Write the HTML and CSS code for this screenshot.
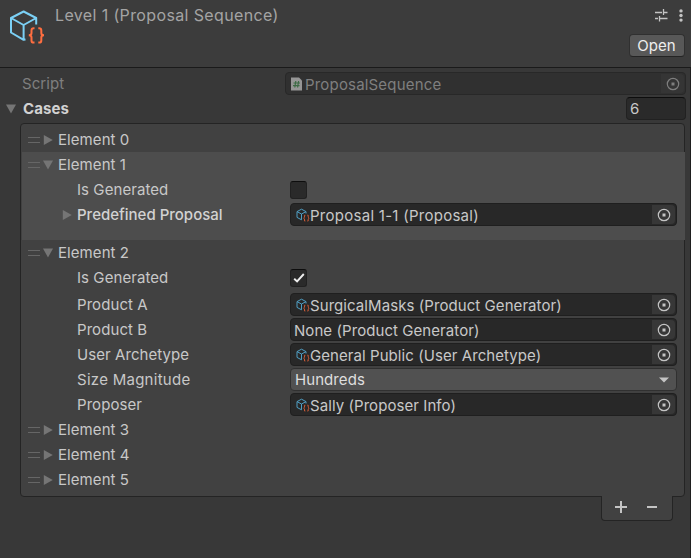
FILE: index.html
```html
<!DOCTYPE html>
<html lang="en">
<head>
<meta charset="utf-8">
<title>Inspector</title>
<link rel="stylesheet" href="styles.css">
</head>
<body>
<svg class="defs" aria-hidden="true">
  <symbol id="asset" viewBox="0 0 36 36">
    <path d="M27.200 16.500V10L14.600 3.500 2 10v14.500l12.600 7.300 1.900-.2M2 10l12.600 7L27.200 10M14.600 17v14.800" fill="none" stroke="#7bd0f5" stroke-width="2" stroke-linejoin="round"/>
    <path d="M25.500 20.200h-.8q-2.200 0-2.200 2.200v2.600q0 2.300-2.700 2.300 2.700 0 2.700 2.300v2.800q0 2.200 2.200 2.200h.8M29.300 20.200h.8q2.200 0 2.200 2.200v2.600q0 2.300 2.700 2.300-2.700 0-2.700 2.300v2.800q0 2.200-2.200 2.200h-.8" fill="none" stroke="#ff6e40" stroke-width="2"/>
  </symbol>
  <symbol id="asset-small" viewBox="0 0 14 14">
    <path d="M10 5.500V3.600L5.500 1.200 1 3.600v5.800l4.500 2.400M1 3.600l4.500 2.400L10 3.600M5.500 6v5.800" fill="none" stroke="#4f9fc4" stroke-width="1"/>
    <path d="M9.400 7.200h-.9v2l-.9.9.9.9v2h.9M11.300 7.200h.9v2l.9.9-.9.9v2h-.9" fill="none" stroke="#c55a38" stroke-width="1"/>
  </symbol>
  <symbol id="picker" viewBox="0 0 14 14">
    <circle cx="7" cy="7" r="5.700" fill="none" stroke="currentColor" stroke-width="1.200"/>
    <rect x="5.500" y="5.500" width="3" height="3" fill="currentColor"/>
  </symbol>
  <symbol id="right" viewBox="0 0 10 10"><path d="M.8 0v10L9.800 5z" fill="currentColor"/></symbol>
  <symbol id="down" viewBox="0 0 10 10"><path d="M0 .5h10L5 9.500z" fill="currentColor"/></symbol>
</svg>
<div class="inspector">
  <header class="header">
    <svg class="asset-icon"><use href="#asset"/></svg>
    <h1 class="title">Level 1 (Proposal Sequence)</h1>
    <div class="actions">
      <div class="tools">
        <svg width="13" height="13" viewBox="0 0 13 13"><path d="M0 3.500h7M8.500 3.500h4M8.500 0v6M0 9.500h3M5 9.500h7.500M4.500 7v5.500" fill="none" stroke="#c4c4c4" stroke-width="1.300"/></svg>
        <svg width="4" height="13" viewBox="0 0 4 13"><g fill="#c4c4c4"><circle cx="2" cy="1.900" r="1.700"/><circle cx="2" cy="6.500" r="1.700"/><circle cx="2" cy="11.100" r="1.700"/></g></svg>
      </div>
      <button class="open">Open</button>
    </div>
  </header>
  <main class="body">
    <div class="script-row">
      <span class="script-label">Script</span>
      <div class="field disabled">
        <svg class="script-icon" viewBox="0 0 12 14"><path d="M0 .5h8l3 3v10H0z" fill="#969696"/><path d="M4.800 4 3.800 10.500M7.600 4 6.600 10.500M2.500 6h6.500M2 8.600h6.500" stroke="#3d6b45" stroke-width="1.200"/></svg>
        <span class="value">ProposalSequence</span>
        <span class="pick"><svg><use href="#picker"/></svg></span>
      </div>
    </div>
    <div class="cases-row">
      <svg class="arrow"><use href="#down"/></svg>
      <span class="cases-label">Cases</span>
      <div class="count">6</div>
    </div>
    <section class="list">
      <div class="element"><div class="head"><i class="grip"></i><svg class="arrow"><use href="#right"/></svg><span>Element 0</span></div></div>
      <div class="element selected">
        <div class="head"><i class="grip"></i><svg class="arrow"><use href="#down"/></svg><span>Element 1</span></div>
        <div class="prop"><span class="name">Is Generated</span><span class="check"></span></div>
        <div class="prop strong"><svg class="arrow"><use href="#right"/></svg><span class="name">Predefined Proposal</span>
          <div class="field"><svg class="small"><use href="#asset-small"/></svg><span class="value wide">Proposal 1-1 (Proposal)</span><span class="pick"><svg><use href="#picker"/></svg></span></div></div>
      </div>
      <div class="element">
        <div class="head"><i class="grip"></i><svg class="arrow"><use href="#down"/></svg><span>Element 2</span></div>
        <div class="prop toggle"><span class="name">Is Generated</span><span class="check"><svg width="12" height="12" viewBox="0 0 12 12"><path d="m1.200 6.700 2.900 2.800L10.800 2" fill="none" stroke="#eee" stroke-width="1.900"/></svg></span></div>
        <div class="prop"><span class="name">Product A</span>
          <div class="field"><svg class="small"><use href="#asset-small"/></svg><span class="value">SurgicalMasks (Product Generator)</span><span class="pick"><svg><use href="#picker"/></svg></span></div></div>
        <div class="prop"><span class="name">Product B</span>
          <div class="field empty"><span class="value">None (Product Generator)</span><span class="pick"><svg><use href="#picker"/></svg></span></div></div>
        <div class="prop"><span class="name">User Archetype</span>
          <div class="field"><svg class="small"><use href="#asset-small"/></svg><span class="value">General Public (User Archetype)</span><span class="pick"><svg><use href="#picker"/></svg></span></div></div>
        <div class="prop"><span class="name wide">Size Magnitude</span>
          <div class="field select"><span class="value">Hundreds</span><svg class="caret" viewBox="0 0 10 6"><path d="M0 .5h10L5 5.500z" fill="#c4c4c4"/></svg></div></div>
        <div class="prop"><span class="name">Proposer</span>
          <div class="field"><svg class="small"><use href="#asset-small"/></svg><span class="value">Sally (Proposer Info)</span><span class="pick"><svg><use href="#picker"/></svg></span></div></div>
      </div>
      <div class="element"><div class="head"><i class="grip"></i><svg class="arrow"><use href="#right"/></svg><span>Element 3</span></div></div>
      <div class="element"><div class="head"><i class="grip"></i><svg class="arrow"><use href="#right"/></svg><span>Element 4</span></div></div>
      <div class="element"><div class="head"><i class="grip"></i><svg class="arrow"><use href="#right"/></svg><span>Element 5</span></div></div>
    </section>
    <footer class="list-actions">
      <svg width="12" height="12" viewBox="0 0 12 12"><path d="M0 6h12M6 0v12" stroke="#c4c4c4" stroke-width="2"/></svg>
      <svg width="10" height="12" viewBox="0 0 10 12"><path d="M0 6h10" stroke="#c4c4c4" stroke-width="2"/></svg>
    </footer>
  </main>
</div>
</body>
</html>
```
FILE: styles.css
```css
* { box-sizing: border-box; }
body {
  margin: 0;
  background: #383838;
  color: #c8c8c8;
  font: 15px/25px Inter, "Liberation Sans", sans-serif;
  letter-spacing: 0.07px;
}
svg { display: block; flex: none; }
.defs { position: absolute; width: 0; height: 0; }
.inspector { width: 691px; height: 558px; display: flex; flex-direction: column; overflow: hidden; }
.header {
  height: 68px;
  flex: none;
  display: flex;
  background: #3c3c3c;
  border-bottom: 1px solid #1a1a1a;
  padding: 0 6px 0 9px;
}
.asset-icon { width: 36px; height: 36px; margin-top: 8px; }
.title { margin: 3px 0 0 10px; font-size: 16px; font-weight: 400; color: #a4a4a4; letter-spacing: 0.37px; line-height: 25px; }
.actions { margin-left: auto; display: flex; flex-direction: column; align-items: flex-end; }
.tools { display: flex; gap: 11px; margin: 9px 2px 0 0; }
.open {
  width: 56px;
  height: 23px;
  margin-top: 12px;
  padding: 0 1px 0 0;
  font: inherit;
  line-height: 20px;
  letter-spacing: 0.1px;
  color: #eee;
  background: #585858;
  border: 1px solid #303030;
  border-bottom-color: #242424;
  border-radius: 4px;
}
.body { flex: 1; border-right: 1px solid #1f1f1f; padding: 3px 4px 0 5px; display: flex; flex-direction: column; }
.script-row, .cases-row { display: flex; align-items: center; height: 25px; flex: none; }
.script-label { width: 263px; margin-left: 17px; color: #7f7f7f; }
.field {
  flex: 1;
  height: 23px;
  display: flex;
  align-items: center;
  background: #282828;
  border: 1px solid #1f1f1f;
  border-radius: 4px;
  padding-left: 4px;
  line-height: 21px;
}
.field .value { flex: 1; white-space: nowrap; padding-top: 1px; }
.field .wide, .prop .wide { letter-spacing: 0.27px; }
.empty { padding-left: 3px; }
.disabled { background: #303030; border-color: #282828; color: #7f7f7f; }
.disabled .value { letter-spacing: 0.18px; }
.script-icon { width: 12px; height: 14px; margin: 0 2px 0 1px; }
.pick { width: 23px; height: 19px; margin-right: 1px; background: #373737; border-radius: 0 4px 4px 0; display: flex; align-items: center; justify-content: center; color: #c4c4c4; }
.pick svg { width: 14px; height: 14px; }
.disabled .pick { background: #353535; color: #7f7f7f; }
.arrow { width: 10px; height: 10px; color: #757575; }
.cases-row { padding-left: 1px; }
.cases-label { margin-left: 7px; font-weight: 700; color: #d2d2d2; }
.count {
  width: 60px;
  height: 23px;
  margin-left: auto;
  padding-left: 3px;
  line-height: 22px;
  background: #2a2a2a;
  border: 1px solid #212121;
  border-top-color: #0d0d0d;
  border-radius: 4px;
}
.list {
  width: 665px;
  height: 374px;
  margin: 2px 0 0 15px;
  padding: 3px 0 0 1px;
  flex: none;
  background: #414141;
  border: 1px solid #242424;
  border-radius: 4px;
}
.selected { background: #4d4d4d; height: 88px; margin-right: -1px; padding-right: 1px; }
.head { height: 25px; display: flex; align-items: center; padding-left: 6px; }
.grip { width: 12px; height: 6px; border: solid #666; border-width: 1px 0; margin-right: 3px; }
.head span { margin-left: 5px; }
.prop { height: 25px; display: flex; align-items: center; padding: 0 7px 0 55px; }
.prop .name { width: 213px; flex: none; }
.toggle { margin-bottom: 2px; }
.prop.strong { padding-left: 40px; }
.strong .name { margin-left: 5px; font-weight: 500; color: #d2d2d2; letter-spacing: 0; }
.check { width: 17px; height: 18px; display: flex; align-items: center; justify-content: center; background: #2a2a2a; border: 1px solid #212121; border-top-color: #0d0d0d; border-radius: 3px; }
.small { width: 14px; height: 14px; margin-left: 1px; }
.select { background: #515151; border-color: #303030; color: #dedede; }
.select .value { padding: 0 0 1px; }
.caret { width: 10px; height: 6px; margin-right: 7px; }
.list-actions {
  width: 72px;
  height: 25px;
  margin: -1px 13px 0 auto;
  display: flex;
  align-items: center;
  gap: 20px;
  padding: 0 0 2px 13px;
  background: #414141;
  border: 1px solid #242424;
  border-top: 0;
  border-radius: 0 0 4px 4px;
}
```
